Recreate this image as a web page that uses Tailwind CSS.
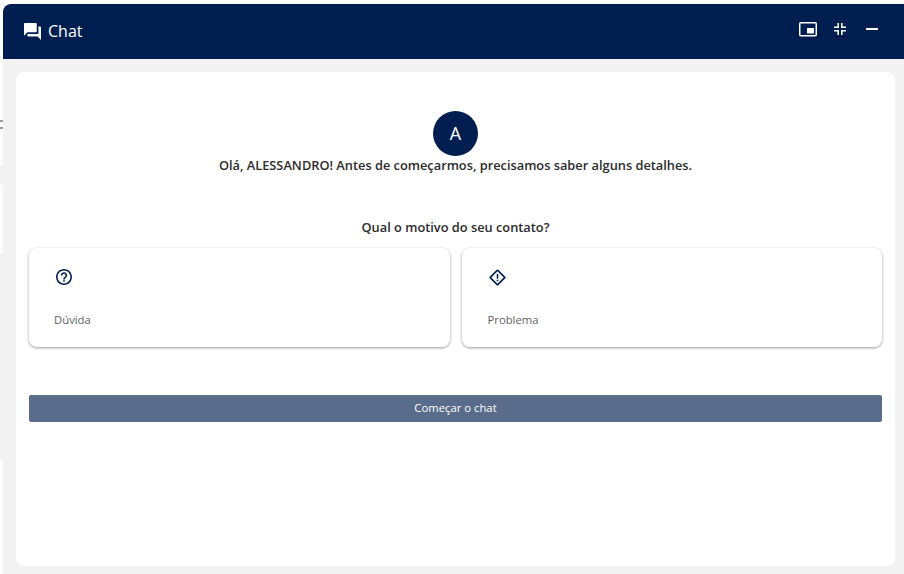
<!DOCTYPE html>
<html lang="pt-BR">
<head>
  <meta charset="UTF-8" />
  <title>Chat</title>
  <script src="https://cdn.jsdelivr.net/npm/@tailwindcss/browser@4"></script>
</head>
<body class="w-[904px] h-[574px] overflow-hidden bg-white flex font-['Open_Sans',sans-serif] text-[#2b2b2b]">
  <!-- page behind the chat window -->
  <div class="w-[3px] h-full flex flex-col shrink-0">
    <div class="h-[165px] bg-white pt-[120px]">
      <div class="h-[9px] border-y-2 border-[#9a9a9a]"></div>
    </div>
    <div class="h-[20px] bg-[#f3f3f3]"></div>
    <div class="h-[68px] bg-white"></div>
    <div class="h-[207px] bg-[#f3f3f3]"></div>
    <div class="flex-1 bg-white"></div>
  </div>

  <div class="flex-1 pt-[4px] flex flex-col">
    <header class="h-[55px] bg-[#001f50] rounded-tl-lg flex items-center text-white pl-[21px] pr-[26px] shrink-0">
      <svg class="w-[17px] h-[17px] mr-[7px]" viewBox="2 2 20 20" fill="currentColor"><path d="M21 6h-2v9H6v2c0 .55.45 1 1 1h11l4 4V7c0-.55-.45-1-1-1zm-4 6V3c0-.55-.45-1-1-1H3c-.55 0-1 .45-1 1v14l4-4h10c.55 0 1-.45 1-1z"/></svg>
      <span class="text-[16px] -mt-px">Chat</span>
      <div class="ml-auto flex items-center -mt-[5px]">
        <svg class="w-[18px] h-[15px]" viewBox="0 0 18 15" fill="none"><rect x="0.75" y="0.75" width="16.5" height="13" rx="1" stroke="white" stroke-width="1.5"/><rect x="8" y="6" width="7" height="5.5" fill="white"/></svg>
        <svg class="w-[12px] h-[12px] ml-[17px]" viewBox="0 0 12 12" fill="none" stroke="white" stroke-width="1.6"><path d="M4.2 0v4.2H0M7.8 0v4.2H12M4.2 12V7.8H0M7.8 12V7.8H12"/></svg>
        <div class="w-[12px] h-[1.5px] bg-white ml-[20px]"></div>
      </div>
    </header>

    <div class="flex-1 bg-[#f3f3f3] pl-[13px] pr-[9px] pt-[13px] pb-[8px] flex">
      <main class="flex-1 bg-white rounded-lg px-[13px] pt-[39px] flex flex-col items-stretch">
        <div class="w-[45px] h-[45px] rounded-full bg-[#001f50] text-white text-[18px] flex items-center justify-center self-center">A</div>
        <p class="text-center text-[12.8px] leading-[18px] font-semibold">Olá, ALESSANDRO! Antes de começarmos, precisamos saber alguns detalhes.</p>
        <p class="mt-[44px] text-center text-[12.8px] leading-[18px] font-semibold">Qual o motivo do seu contato?</p>

        <div class="mt-[12px] grid grid-cols-2 gap-[12px]">
          <div class="h-[99px] rounded-lg bg-white shadow-[0_1px_3px_rgba(0,0,0,0.4)] pl-[26px] pt-[21px]">
            <svg class="w-[16px] h-[16px] ml-px text-[#001f50]" viewBox="2 2 20 20" fill="currentColor"><path d="M11 18h2v-2h-2v2zm1-16C6.48 2 2 6.48 2 12s4.48 10 10 10 10-4.48 10-10S17.52 2 12 2zm0 18c-4.41 0-8-3.59-8-8s3.59-8 8-8 8 3.59 8 8-3.59 8-8 8zm0-14c-2.21 0-4 1.79-4 4h2c0-1.1.9-2 2-2s2 .9 2 2c0 2-3 1.75-3 5h2c0-2.25 3-2.5 3-5 0-2.21-1.79-4-4-4z"/></svg>
            <p class="mt-[27px] -ml-px text-[11.3px] leading-[16px] text-[#5f5f5f]">Dúvida</p>
          </div>
          <div class="h-[99px] rounded-lg bg-white shadow-[0_1px_3px_rgba(0,0,0,0.4)] pl-[26px] pt-[21px]">
            <svg class="w-[17px] h-[17px] ml-px text-[#001f50]" viewBox="1 1 22 22" fill="currentColor"><path d="M12 1.6a1.9 1.9 0 0 0-1.35.56l-8.49 8.49a1.9 1.9 0 0 0 0 2.7l8.49 8.49a1.9 1.9 0 0 0 2.7 0l8.49-8.49a1.9 1.9 0 0 0 0-2.7l-8.49-8.49A1.9 1.9 0 0 0 12 1.6zm0 2.4 8 8-8 8-8-8 8-8zm-1 3.5v6h2v-6h-2zm0 7.5v2h2v-2h-2z"/></svg>
            <p class="mt-[26px] text-[11.3px] leading-[16px] text-[#5f5f5f]">Problema</p>
          </div>
        </div>

        <button class="mt-[48px] h-[27px] pb-px rounded-[2px] bg-[#5a6c8c] text-white text-[11.3px]">Começar o chat</button>
      </main>
    </div>
  </div>
</body>
</html>
